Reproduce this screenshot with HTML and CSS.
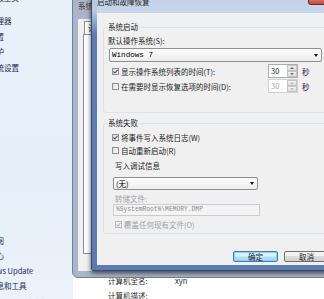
FILE: index.html
```html
<!DOCTYPE html>
<html>
<head>
    <meta charset="UTF-8">
    <title>启动和故障恢复</title>
    <link rel="stylesheet" href="styles.css">
</head>
<body>
<div class="page">
    <div class="sidebar">
        <ul class="links top">
            <li class="home">控制面板主页</li>
            <li>设备管理器</li>
            <li>远程设置</li>
            <li>系统保护</li>
            <li>高级系统设置</li>
        </ul>
        <ul class="links bottom">
            <li>另请参阅</li>
            <li>操作中心</li>
            <li>Windows Update</li>
            <li>性能信息和工具</li>
            <li class="mark">更多信息</li>
        </ul>
    </div>

    <div class="main">
        <div class="info-row"><span class="info-label">计算机全名:</span><span>xyn</span></div>
        <div class="info-row"><span class="info-label">计算机描述:</span></div>
    </div>

    <!-- window behind: 系统属性 -->
    <div class="window back">
        <div class="titlebar">系统属性</div>
        <div class="back-body">
            <div class="tabs"><span class="tab">计算机名</span></div>
            <div class="tab-panel"></div>
        </div>
    </div>

    <!-- active dialog -->
    <div class="window dialog">
        <div class="titlebar">
            <span class="title">启动和故障恢复</span>
            <span class="close"></span>
        </div>
        <div class="dialog-body">
            <fieldset class="group first">
                <legend>系统启动</legend>
                <div class="label">默认操作系统(S):</div>
                <div class="combo wide mono">Windows 7<span class="arrow"></span></div>
                <div class="check-row tall">
                    <span class="checkbox checked"><svg width="5" height="5" viewBox="0 0 5 5"><path d="M0.5 2.5 L2 4 L4.5 0.8" fill="none" stroke="#3d4f86" stroke-width="1.1"/></svg></span>
                    <span class="check-label">显示操作系统列表的时间(T):</span>
                    <span class="spin"><span class="spin-value">30</span><span class="spin-buttons"><i class="up"></i><i class="down"></i></span></span>
                    <span class="unit">秒</span>
                </div>
                <div class="check-row tall second">
                    <span class="checkbox"></span>
                    <span class="check-label">在需要时显示恢复选项的时间(D):</span>
                    <span class="spin disabled"><span class="spin-value">30</span><span class="spin-buttons"><i class="up"></i><i class="down"></i></span></span>
                    <span class="unit">秒</span>
                </div>
            </fieldset>

            <fieldset class="group last">
                <legend>系统失败</legend>
                <div class="check-row tall">
                    <span class="checkbox checked"><svg width="5" height="5" viewBox="0 0 5 5"><path d="M0.5 2.5 L2 4 L4.5 0.8" fill="none" stroke="#3d4f86" stroke-width="1.1"/></svg></span>
                    <span class="check-label">将事件写入系统日志(W)</span>
                </div>
                <div class="check-row">
                    <span class="checkbox"></span>
                    <span class="check-label">自动重新启动(R)</span>
                </div>
                <div class="debug">
                    <div class="label">写入调试信息</div>
                    <div class="combo short">(无)<span class="arrow"></span></div>
                    <div class="label muted dump">转储文件:</div>
                    <div class="textbox mono">%SystemRoot%\MEMORY.DMP</div>
                    <div class="check-row small">
                        <span class="checkbox disabled checked"><svg width="5" height="5" viewBox="0 0 5 5"><path d="M0.5 2.5 L2 4 L4.5 0.8" fill="none" stroke="#b4b4b4" stroke-width="1.1"/></svg></span>
                        <span class="check-label muted">覆盖任何现有文件(O)</span>
                    </div>
                </div>
            </fieldset>

            <div class="buttons">
                <button class="btn default">确定</button>
                <button class="btn">取消</button>
            </div>
        </div>
    </div>
</div>
</body>
</html>
```

FILE: styles.css
```css
* {
    box-sizing: border-box;
}
body {
    margin: 0;
    font-family: "Noto Sans CJK SC", "Noto Sans", sans-serif;
    font-size: 7.5px;
    color: #1c1c1c;
    overflow: hidden;
}
.page {
    position: relative;
    display: flex;
    width: 324px;
    height: 299px;
    overflow: hidden;
    background: #fff;
}

/* left control panel column */
.sidebar {
    width: 73px;
    flex-shrink: 0;
    display: flex;
    flex-direction: column;
    justify-content: space-between;
    background: linear-gradient(to bottom, #e8f0fa, #e6eef9 60%, #ebf2fb);
    color: #1d2a52;
}
.links {
    list-style: none;
    margin: 0 0 0 -26px;
    padding: 0;
    white-space: nowrap;
}
.links.top {
    margin-top: -10px;
    line-height: 15.8px;
}
.links.top .home {
    margin-bottom: 7px;
}
.links.bottom {
    margin-bottom: -10px;
    line-height: 15.3px;
}
.links .mark {
    padding-left: 48px;
    color: #e03a3a;
    font-size: 6px;
}

/* main white content */
.main {
    flex: 1;
    padding: 273px 0 0 35px;
    line-height: 15px;
    color: #2a2a2a;
}
.info-row {
    display: flex;
}
.info-label {
    width: 67px;
}

/* windows on the desktop */
.window {
    position: absolute;
    top: -6px;
}
.back {
    left: 72px;
    width: 270px;
    height: 284px;
    background: #aab5c9;
    border: 1px solid #76808f;
    border-radius: 6px;
    padding: 0 0 6px 5px;
}
.back .titlebar {
    height: 24px;
    line-height: 22px;
    color: #3a3a3a;
}
.back-body {
    height: 252px;
    background: #f0f0f0;
    padding: 2px 0 0 5px;
}
.tabs {
    display: flex;
    height: 13px;
}
.tab {
    margin-left: 1px;
    padding: 0 3px;
    line-height: 12px;
    background: #fff;
    border: 1px solid #898c95;
    border-bottom: 0;
}
.tab-panel {
    height: 220px;
    background: #fff;
    border: 1px solid #898c95;
}

.dialog {
    left: 91px;
    width: 245px;
    background: linear-gradient(to bottom, #b9c9de 0, #b9c9de 16px, #5a7cb3 40px, #5a7cb3 100%);
    border: 1px solid #3a4a62;
    border-radius: 6px 6px 2px 2px;
    padding: 0 0 5px 5px;
    box-shadow: 0 2px 5px rgba(0, 0, 0, 0.65);
}
.dialog .titlebar {
    position: relative;
    height: 18px;
    background: linear-gradient(to bottom, #c0d2e8, #c9d8eb);
    color: #1e1e1e;
}
.dialog .title {
    display: block;
    line-height: 14px;
}
.close {
    position: absolute;
    left: 211px;
    top: 0;
    width: 30px;
    height: 10px;
    background: linear-gradient(to bottom, #e6a090, #c64a3c);
    border: 1px solid #6e2a22;
    border-top: 0;
    border-radius: 0 0 3px 3px;
}
.dialog-body {
    height: 252px;
    background: #f0f0f0;
    padding: 9px 6px 0 6px;
}

/* group boxes */
.group {
    margin: 0;
    padding: 0 5px 19px 4px;
    min-width: 0;
    border: 1px solid #dbe3e8;
    border-radius: 3px;
}
.group.last {
    margin-top: 5px;
    padding-bottom: 3px;
}
legend {
    margin-left: -1px;
    padding: 0 1px;
    line-height: 10px;
}
.label {
    height: 10px;
    line-height: 10px;
    margin-top: 4px;
}
.muted {
    color: #a2a2a2;
}

.combo {
    display: flex;
    align-items: center;
    height: 14px;
    padding-left: 2px;
    border: 1px solid #8e8f8f;
    border-radius: 2px;
    background: linear-gradient(to bottom, #fdfdfd, #ededed);
    color: #000;
}
.combo.wide {
    width: 213px;
    margin: 2px 0 0 1px;
}
.combo.short {
    width: 145px;
    height: 13px;
    margin-top: 6px;
}
.arrow {
    margin-left: auto;
    margin-right: 3px;
    border-left: 2px solid transparent;
    border-right: 2px solid transparent;
    border-top: 3px solid #111;
}
.mono {
    font-family: "Liberation Mono", "DejaVu Sans Mono", monospace;
}
.combo.mono {
    font-size: 7.6px;
}

.check-row {
    display: flex;
    align-items: center;
    height: 13px;
}
.check-row.tall {
    height: 14px;
    margin-top: 2px;
}
.check-row.second {
    margin-top: 1px;
}
.check-row.small {
    height: 12px;
    margin-top: 2px;
}
.checkbox {
    display: flex;
    align-items: center;
    justify-content: center;
    width: 7px;
    height: 7px;
    margin: 0 2px 0 4px;
    border: 1px solid #8f8f8f;
    background: linear-gradient(135deg, #dcdcdc, #fafafa);
}
.checkbox.disabled {
    border-color: #bcbcbc;
    background: #f4f4f4;
}
.check-label {
    flex: 1;
    white-space: nowrap;
}

.spin {
    display: flex;
    width: 30px;
    height: 14px;
    border: 1px solid #abadb3;
    background: #fff;
}
.spin-value {
    flex: 1;
    padding-left: 2px;
    line-height: 12px;
}
.spin-buttons {
    display: flex;
    flex-direction: column;
    width: 10px;
}
.spin-buttons i {
    flex: 1;
    display: flex;
    align-items: center;
    justify-content: center;
    background: linear-gradient(to bottom, #f3f3f3, #dcdcdc);
    border: 1px solid #c2c4c8;
}
.spin-buttons .up::after {
    content: "";
    border-left: 2px solid transparent;
    border-right: 2px solid transparent;
    border-bottom: 2px solid #6a6a6a;
}
.spin-buttons .down::after {
    content: "";
    border-left: 2px solid transparent;
    border-right: 2px solid transparent;
    border-top: 2px solid #6a6a6a;
}
.spin.disabled {
    border-color: #d2d2d2;
    color: #a8a8a8;
}
.spin.disabled .spin-buttons i::after {
    border-top-color: #bdbdbd;
    border-bottom-color: #bdbdbd;
}
.unit {
    width: 21px;
    margin-left: 4px;
}

.debug {
    padding-left: 5px;
}
.debug .label {
    padding-left: 2px;
}
.debug .dump {
    margin-top: 4px;
}
.textbox {
    width: 147px;
    height: 12px;
    padding-left: 2px;
    line-height: 10px;
    font-size: 6.3px;
    color: #8a8a8a;
    border: 1px solid #c9ccd2;
    background: #f4f4f4;
}
.debug .check-row .checkbox {
    margin-left: 2px;
}

.buttons {
    display: flex;
    justify-content: flex-end;
    gap: 6px;
    margin-top: 17px;
}
.btn {
    width: 45px;
    height: 11px;
    padding: 0;
    font: inherit;
    line-height: 9px;
    color: #1c1c1c;
    border: 1px solid #707070;
    border-radius: 2px;
    background: linear-gradient(to bottom, #f2f2f2 50%, #dddddd 50%, #cfcfcf);
}
.btn.default {
    border-color: #3c7fb1;
    background: linear-gradient(to bottom, #dcf0fb 45%, #b4def5 55%, #a0d4f0);
    box-shadow: inset 0 0 0 1px #8dd0f3;
}
```
